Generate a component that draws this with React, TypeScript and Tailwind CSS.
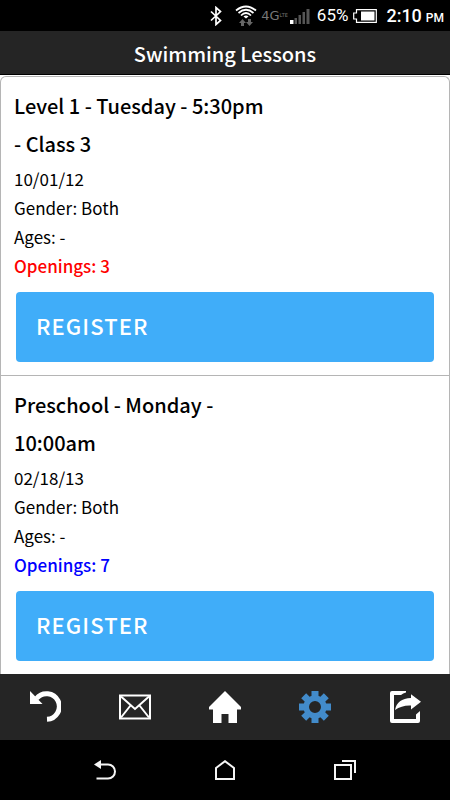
import type { ReactNode } from 'react'

interface Lesson {
  id: string
  title: string
  date: string
  gender: string
  ages: string
  openings: number
  openingsClass: string
}

const LESSONS: Lesson[] = [
  { id: 'level-1', title: 'Level 1 - Tuesday - 5:30pm - Class 3', date: '10/01/12', gender: 'Both', ages: '-', openings: 3, openingsClass: 'text-[#ff0000]' },
  { id: 'preschool', title: 'Preschool - Monday - 10:00am', date: '02/18/13', gender: 'Both', ages: '-', openings: 7, openingsClass: 'text-[#0000ff]' },
]

function StatusBar() {
  return (
    <div className="flex h-[31px] items-center justify-end bg-black pr-[6px] font-[Roboto,sans-serif] text-white">
      <svg width="12" height="20" viewBox="0 0 12 20" fill="none" stroke="#fff" strokeWidth="1.7" className="mr-[13px]">
        <path d="M1 5.500L10.500 14.500L6 18.500V1.500L10.500 5.500L1 14.500" />
      </svg>
      <svg width="22" height="22" viewBox="0 0 22 22" fill="none" className="mr-1">
        <g stroke="#fff" strokeWidth="1.7">
          <path d="M1 5.500Q11 -2.500 21 5.500" />
          <path d="M3.500 8Q11 1.500 18.500 8" />
          <path d="M6 10.500Q11 5.500 16 10.500" />
        </g>
        <path d="M8.500 11.500Q11 9.500 13.500 11.500L11 13.500z" fill="#fff" />
        <path d="M7.500 14l3.500 4h-2v3h-3v-3h-2zM14.500 21l-3.500-4h2v-3h3v3h2z" transform="rotate(180 11 17.500)" fill="#666" />
      </svg>
      <span className="flex items-center font-['DejaVu_Sans',sans-serif] text-[#777]">
        <span className="text-[13px] leading-none">4G</span>
        <span className="text-[5px] leading-none">LTE</span>
      </span>
      <svg width="20" height="16" viewBox="0 0 20 16" className="mr-[7px] ml-[2px]">
        <path d="M0 12h3.500v4H0z" fill="#fff" />
        <path d="M4.500 10h2.500v6h-2.500zM8.500 7h2.500v9h-2.500zM12.500 4h2.500v12h-2.500zM16.500 1h3v15h-3z" fill="#555" />
      </svg>
      <span className="mr-[5px] text-[17px]">65%</span>
      <svg width="24" height="14" viewBox="0 0 24 14" className="mr-[9px]">
        <path d="M3.500 .7H23.300V13.300H3.500V10H.7V4H3.500z" fill="none" stroke="#fff" strokeWidth="1.200" />
        <path d="M8 2.500h13.500v9H8z" fill="#fff" />
      </svg>
      <span className="flex items-baseline gap-1 text-lg font-medium">
        2:10 <span className="text-xs">PM</span>
      </span>
    </div>
  )
}

function LessonCard({ lesson, first }: { lesson: Lesson; first: boolean }) {
  return (
    <article className={`border-x border-t border-[#b5b5b5] px-[13px] pt-[10px] pb-[13px] ${first ? 'rounded-t-md' : ''}`}>
      <h2 className="w-3/5 text-xl leading-[38px] font-medium">{lesson.title}</h2>
      <div className="pt-px text-[17px] leading-[29px]">
        <p>{lesson.date}</p>
        <p>Gender: {lesson.gender}</p>
        <p>Ages: {lesson.ages}</p>
        <p className={`font-medium ${lesson.openingsClass}`}>Openings: {lesson.openings}</p>
      </div>
      <div className="px-[2px] pt-3">
        <button type="button" className="h-[70px] w-full rounded-[4px] bg-[#40adf9] px-5 pb-1 text-left text-[22px] font-medium tracking-wider text-white uppercase">
          Register
        </button>
      </div>
    </article>
  )
}

function BarButton({ label, children }: { label: string; children: ReactNode }) {
  return (
    <button type="button" aria-label={label} className="flex h-full flex-1 items-center justify-center">
      {children}
    </button>
  )
}

function Toolbar() {
  return (
    <nav className="flex h-[66px] bg-[#252525] text-white">
      <BarButton label="Undo">
        <svg width="32" height="32" viewBox="0 0 32 32">
          <path d="M7.500 7.500A12.800 12.800 0 1 1 18 28.300" fill="none" stroke="currentColor" strokeWidth="5" />
          <path d="M1 0V13H13.500z" fill="currentColor" />
        </svg>
      </BarButton>
      <BarButton label="Messages">
        <svg width="32" height="26" viewBox="0 0 32 26" fill="none" stroke="currentColor" strokeWidth="2">
          <path d="M1 1.500H31V24.500H1z" />
          <path d="M2 2.500L16 15L30 2.500M2 23.500L11.500 11.500M30 23.500L20.500 11.500" />
        </svg>
      </BarButton>
      <BarButton label="Home">
        <svg width="32" height="34" viewBox="0 0 32 34" fill="currentColor">
          <path d="M16 1L32 17V19.500H28V33H19.500V24H12.500V33H4V19.500H0V17z" />
        </svg>
      </BarButton>
      <BarButton label="Settings">
        <svg width="32" height="32" viewBox="-16 -16 32 32" fill="#428bca">
          <circle r="8.800" fill="none" stroke="#428bca" strokeWidth="5.600" />
          {[0, 45, 90, 135].map(a => (
            <path key={a} d="M-3.500 -16H3.500V-9H-3.500zM-3.500 9H3.500V16H-3.500z" transform={`rotate(${a})`} />
          ))}
        </svg>
      </BarButton>
      <BarButton label="Share">
        <svg width="32" height="32" viewBox="0 0 32 32" fill="currentColor">
          <path d="M17 0H3Q1 0 1 2V30Q1 32 3 32H29Q31 32 31 30V20L27 23.500V28H5V4H12Q14 2 17 1.500z" />
          <path d="M6 19Q8 7.500 22 7V3.300L32 10.700L22 18.500V14.500Q13 14 6 19z" />
        </svg>
      </BarButton>
    </nav>
  )
}

function SystemNav() {
  return (
    <nav className="flex h-[60px] bg-black px-[45px] text-[#f5f5f5]">
      <BarButton label="Back">
        <svg width="22" height="20" viewBox="0 0 22 20" fill="none">
          <path d="M4 4.500H14A7 7 0 0 1 14 18.500H2.500" stroke="currentColor" strokeWidth="2" />
          <path d="M0 4.500L7 0V9z" fill="currentColor" />
        </svg>
      </BarButton>
      <BarButton label="Home screen">
        <svg width="20" height="20" viewBox="0 0 20 20" fill="none" stroke="currentColor" strokeWidth="2">
          <path d="M1 8L10 1.200L19 8V19H1z" />
        </svg>
      </BarButton>
      <BarButton label="Recent apps">
        <svg width="22" height="20" viewBox="0 0 22 20" fill="none" stroke="currentColor" strokeWidth="2">
          <path d="M1 5H17V19H1z" />
          <path d="M8 1H21V13" />
        </svg>
      </BarButton>
    </nav>
  )
}

export default function App() {
  return (
    <div className="flex min-h-screen flex-col bg-white font-['Noto_Sans_CJK_SC',sans-serif] text-black">
      <StatusBar />
      <header className="flex h-11 items-center justify-center border-b border-black bg-[#252525] pt-[3px]">
        <h1 className="text-xl font-medium text-white">Swimming Lessons</h1>
      </header>
      <main className="flex-1 pt-px">
        {LESSONS.map((lesson, i) => (
          <LessonCard key={lesson.id} lesson={lesson} first={i === 0} />
        ))}
      </main>
      <Toolbar />
      <SystemNav />
    </div>
  )
}
